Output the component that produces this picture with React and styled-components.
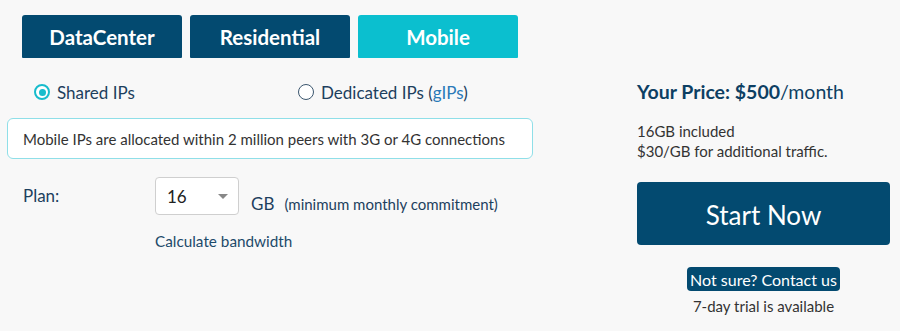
import React from "react";
import styled, { createGlobalStyle } from "styled-components";

const Global = createGlobalStyle`
  html, body { margin: 0; padding: 0; background: #f8f8f8; }
  body { font-family: Lato, "Open Sans", Arial, sans-serif; }
  * { box-sizing: border-box; }
`;

const Page = styled.div`
  display: flex;
  align-items: flex-start;
  padding: 15px 0 0 7px;
  height: 331px;
  background: #f8f8f8;
`;

const Left = styled.div`
  width: 526px;
  display: flex;
  flex-direction: column;
`;

const Tabs = styled.div`
  display: flex;
  gap: 8px;
  margin-left: 15px;
`;

const Tab = styled.div`
  width: 160px;
  height: 43px;
  display: flex;
  align-items: center;
  justify-content: center;
  border-radius: 3px 3px 1px 1px;
  background: ${(p) => (p.$active ? "#0bbfcf" : "#034a70")};
  color: #fff;
  font-weight: 700;
  font-size: 20.5px;
`;

const RadioRow = styled.div`
  display: grid;
  grid-template-columns: 264px auto;
  margin: 22px 0 0 27px;
  height: 24px;
  align-items: center;
`;

const RadioItem = styled.label`
  display: flex;
  align-items: center;
  gap: 7px;
  font-size: 17px;
  color: #1d3f5e;
`;

const Circle = styled.span`
  width: 16px;
  height: 16px;
  border-radius: 50%;
  border: ${(p) => (p.$checked ? "2px solid #18bccc" : "1.5px solid #3b566e")};
  display: flex;
  align-items: center;
  justify-content: center;
  background: #fff;
  &::after {
    content: "";
    display: ${(p) => (p.$checked ? "block" : "none")};
    width: 7px;
    height: 7px;
    border-radius: 50%;
    background: #18bccc;
  }
`;

const Link = styled.span`
  color: #2a7ab8;
`;

const InfoBox = styled.div`
  margin-top: 14px;
  height: 41px;
  border: 1.5px solid #8fdfe8;
  border-radius: 6px;
  background: #fff;
  padding: 0 15px;
  display: flex;
  align-items: center;
  font-size: 15px;
  color: #333;
`;

const PlanRow = styled.div`
  display: flex;
  align-items: flex-end;
  margin-top: 18px;
  padding-left: 16px;
`;

const PlanLabel = styled.div`
  width: 132px;
  align-self: flex-start;
  padding-top: 8px;
  font-size: 17px;
  color: #1d3f5e;
`;

const Select = styled.div`
  width: 84px;
  height: 38px;
  background: #fff;
  border: 1px solid #cfcfcf;
  border-radius: 4px;
  display: flex;
  align-items: center;
  justify-content: space-between;
  padding: 0 10px 0 11px;
  font-size: 17px;
  color: #222;
`;

const Caret = styled.span`
  width: 0;
  height: 0;
  border-left: 5px solid transparent;
  border-right: 5px solid transparent;
  border-top: 5px solid #888;
  margin-top: 1px;
`;

const Unit = styled.div`
  margin-left: 12px;
  padding-bottom: 1px;
  display: flex;
  align-items: baseline;
  gap: 10px;
  font-size: 17px;
  color: #1d3f5e;
`;

const UnitNote = styled.span`
  font-size: 15px;
`;

const Calc = styled.div`
  margin: 17px 0 0 148px;
  font-size: 15.3px;
  color: #1d4a6a;
`;

const Right = styled.div`
  margin-left: 104px;
  width: 253px;
  display: flex;
  flex-direction: column;
`;

const Price = styled.div`
  margin-top: 65px;
  font-size: 19.5px;
  line-height: 24px;
  color: #0d3f63;
  b { font-weight: 700; }
`;

const Details = styled.div`
  margin-top: 17px;
  font-size: 15px;
  line-height: 20px;
  color: #333;
`;

const StartButton = styled.div`
  margin-top: 21px;
  height: 63px;
  border-radius: 4px;
  background: #034a70;
  color: #fff;
  font-size: 26px;
  display: flex;
  align-items: center;
  justify-content: center;
  padding-top: 2px;
`;

const Center = styled.div`
  display: flex;
  flex-direction: column;
  align-items: center;
`;

const Badge = styled.div`
  margin-top: 22px;
  height: 24px;
  padding: 0 3px;
  border-radius: 4px;
  background: #034a70;
  color: #fff;
  font-size: 16px;
  display: flex;
  align-items: center;
`;

const Trial = styled.div`
  margin-top: 5px;
  font-size: 15px;
  line-height: 20px;
  color: #333;
`;

export default function App() {
  return (
    <>
      <Global />
      <Page>
        <Left>
          <Tabs>
            <Tab>DataCenter</Tab>
            <Tab>Residential</Tab>
            <Tab $active>Mobile</Tab>
          </Tabs>
          <RadioRow>
            <RadioItem>
              <Circle $checked />
              Shared IPs
            </RadioItem>
            <RadioItem>
              <Circle />
              <span>
                Dedicated IPs (<Link>gIPs</Link>)
              </span>
            </RadioItem>
          </RadioRow>
          <InfoBox>
            Mobile IPs are allocated within 2 million peers with 3G or 4G connections
          </InfoBox>
          <PlanRow>
            <PlanLabel>Plan:</PlanLabel>
            <Select>
              16
              <Caret />
            </Select>
            <Unit>
              GB <UnitNote>(minimum monthly commitment)</UnitNote>
            </Unit>
          </PlanRow>
          <Calc>Calculate bandwidth</Calc>
        </Left>
        <Right>
          <Price>
            <b>Your Price: $500</b>/month
          </Price>
          <Details>
            16GB included
            <br />
            $30/GB for additional traffic.
          </Details>
          <StartButton>Start Now</StartButton>
          <Center>
            <Badge>Not sure? Contact us</Badge>
            <Trial>7-day trial is available</Trial>
          </Center>
        </Right>
      </Page>
    </>
  );
}
